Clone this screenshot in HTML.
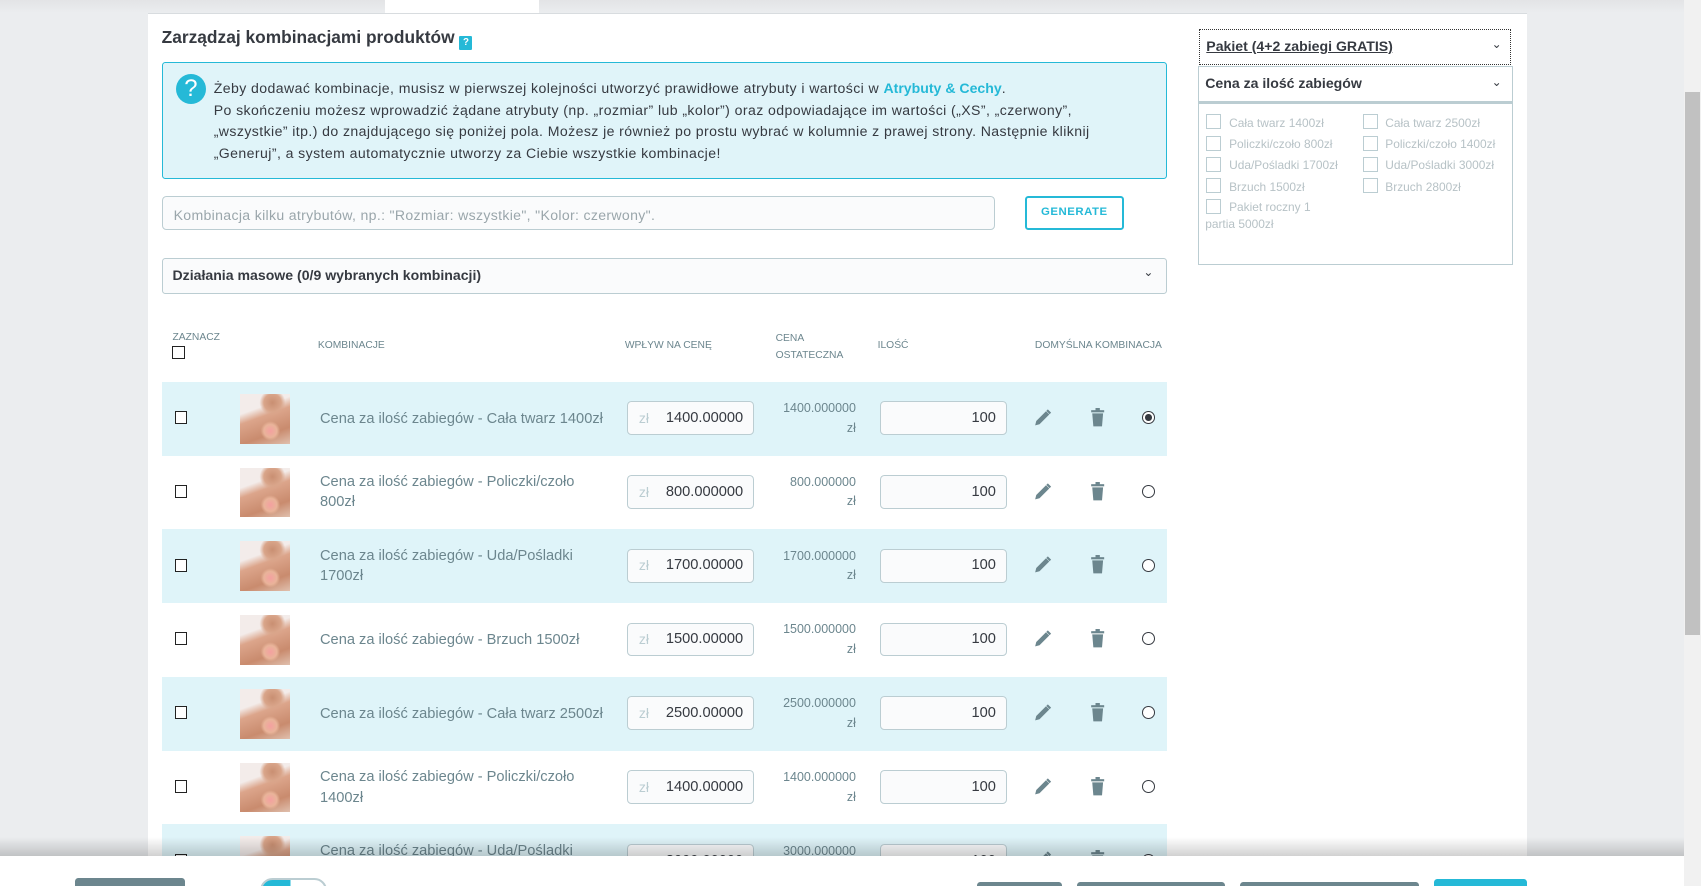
<!DOCTYPE html>
<html><head><meta charset="utf-8"><style>
html,body{margin:0;padding:0;overflow:hidden}
body{width:1568px;height:817px;zoom:1.0848;background:#ebedef;font-family:"Liberation Sans",sans-serif;position:relative;color:#363a41}
.a{position:absolute}
.row{position:absolute;left:149px;width:927px;height:68px}
.row.c{background:#dff4f9}
.cb{position:absolute;width:10px;height:10px;border:1.5px solid #222;background:#fff}
.th{position:absolute;font-size:9.5px;color:#6c868e;line-height:16px}
.nm{position:absolute;left:146px;width:270px;font-size:13.5px;color:#6c868e;line-height:19px}
.inp{position:absolute;background:#fafbfc;border:1px solid #bbcdd2;border-radius:4px;height:31px;box-sizing:border-box}
.fp{position:absolute;left:578px;width:80px;font-size:11.5px;color:#6c868e;text-align:right;line-height:18px}
.ck{position:absolute;width:12px;height:12px;border:1px solid #bbcdd2;background:#fff}
.cl{position:absolute;font-size:11px;color:#b7c2c6}
</style></head><body>
<div class="a" style="left:0;top:0;width:1552px;height:12px;background:linear-gradient(#e3e4e6,#ebedef)"></div>
<div class="a" style="left:355px;top:0;width:142px;height:12px;background:#fff"></div>
<div class="a" style="left:136px;top:12px;width:1272px;height:805px;background:#fff;border-top:1px solid #d8dcdf"></div>
<div class="a" style="left:1552px;top:0;width:16px;height:817px;background:#f1f1f1"></div>
<div class="a" style="left:1553px;top:85px;width:14px;height:500px;background:#c1c1c1"></div>

<div class="a" style="left:149px;top:25px;font-size:16px;font-weight:bold;color:#363a41">Zarządzaj kombinacjami produktów <span style="display:inline-block;width:12px;height:13px;background:#25b9d7;color:#fff;font-size:9px;text-align:center;line-height:13px;vertical-align:-2px;border-radius:1px">?</span></div>

<div class="a" style="left:149px;top:57px;width:925px;height:106px;background:#e0f4f9;border:1px solid #25b9d7;border-radius:3px"></div>
<div class="a" style="left:162px;top:68px;width:28px;height:28px;border-radius:50%;background:#25b9d7;color:#fff;font-size:22px;text-align:center;line-height:28px">?</div>
<div class="a" style="left:197px;top:72px;width:870px;font-size:13px;line-height:19.8px;color:#363a41;letter-spacing:0.38px">Żeby dodawać kombinacje, musisz w pierwszej kolejności utworzyć prawidłowe atrybuty i wartości w <b style="color:#25b9d7;letter-spacing:0">Atrybuty &amp; Cechy</b>.<br>Po skończeniu możesz wprowadzić żądane atrybuty (np. „rozmiar” lub „kolor”) oraz odpowiadające im wartości („XS”, „czerwony”,<br>„wszystkie” itp.) do znajdującego się poniżej pola. Możesz je również po prostu wybrać w kolumnie z prawej strony. Następnie kliknij<br>„Generuj”, a system automatycznie utworzy za Ciebie wszystkie kombinacje!</div>

<div class="a" style="left:149px;top:181px;width:766px;height:29px;border:1px solid #bbcdd2;border-radius:4px;background:#fafbfc"></div>
<div class="a" style="left:160px;top:191px;font-size:13px;color:#9aa6ab;letter-spacing:0.3px">Kombinacja kilku atrybutów, np.: "Rozmiar: wszystkie", "Kolor: czerwony".</div>
<div class="a" style="left:945px;top:181px;width:87px;height:27px;border:2px solid #25b9d7;border-radius:3px;color:#25b9d7;font-size:10.5px;font-weight:bold;text-align:center;line-height:27px;letter-spacing:.5px">GENERATE</div>

<div class="a" style="left:149px;top:238px;width:925px;height:31px;border:1px solid #bbcdd2;border-radius:3px;background:#fafbfc"></div>
<div class="a" style="left:159px;top:246px;font-size:13px;font-weight:bold;color:#363a41">Działania masowe (0/9 wybranych kombinacji)</div>
<div class="a" style="left:1054px;top:244px;font-size:11px;color:#363a41">&#8964;</div>

<div class="th" style="left:159px;top:303px">ZAZNACZ</div>
<div class="cb" style="left:159px;top:319px"></div>
<div class="th" style="left:293px;top:311px">KOMBINACJE</div>
<div class="th" style="left:576px;top:311px">WPŁYW NA CENĘ</div>
<div class="th" style="left:715px;top:304px">CENA<br>OSTATECZNA</div>
<div class="th" style="left:809px;top:311px">ILOŚĆ</div>
<div class="th" style="left:954px;top:311px">DOMYŚLNA KOMBINACJA</div>

<div id="rows"></div>
<script>
var d=[["Cena za ilość zabiegów - Cała twarz 1400zł","1400.00000","1400.000000"],
["Cena za ilość zabiegów - Policzki/czoło<br>800zł","800.000000","800.000000"],
["Cena za ilość zabiegów - Uda/Pośladki<br>1700zł","1700.00000","1700.000000"],
["Cena za ilość zabiegów - Brzuch 1500zł","1500.00000","1500.000000"],
["Cena za ilość zabiegów - Cała twarz 2500zł","2500.00000","2500.000000"],
["Cena za ilość zabiegów - Policzki/czoło<br>1400zł","1400.00000","1400.000000"],
["Cena za ilość zabiegów - Uda/Pośladki<br>3000zł","3000.00000","3000.000000"]];
var h="";
d.forEach(function(r,i){var t=352+68*i;var two=r[0].indexOf("<br>")>0;
h+='<div class="row'+(i%2==0?' c':'')+'" style="top:'+t+'px">'+
'<div class="cb" style="left:12px;top:27px"></div>'+
'<div style="position:absolute;left:72px;top:11px;width:46px;height:46px;background:radial-gradient(circle at 28px 34px,#f4a0a0 0,#e9b49a 6px,transparent 9px),radial-gradient(circle at 30px 8px,#c98f72 0,#d9a58a 8px,transparent 12px),linear-gradient(160deg,#f3ecea 0,#f3ecea 30%,#dca58b 45%,#c98b6e 75%,#e0c0ae 100%)"></div>'+
'<div class="nm" style="top:'+(two?15:25)+'px">'+r[0]+'</div>'+
'<div class="inp" style="left:429px;top:18px;width:117px"><span style="position:absolute;left:10px;top:7px;font-size:13px;color:#bbcdd2">zł</span><span style="position:absolute;right:9px;top:7px;font-size:13.5px;color:#363a41">'+r[1]+'</span></div>'+
'<div class="fp" style="top:16px;left:560px">'+r[2]+'<br>zł</div>'+
'<div class="inp" style="left:662px;top:18px;width:117px"><span style="position:absolute;right:9px;top:7px;font-size:13.5px;color:#363a41">100</span></div>'+
'<svg style="position:absolute;left:803px;top:24px" width="18" height="18" viewBox="0 0 18 18"><path d="M2 16 L3 12 L12 3 L15 6 L6 15 Z" fill="#6c868e"/><path d="M13 2 L16 5" stroke="#6c868e" stroke-width="2"/></svg>'+
'<svg style="position:absolute;left:855px;top:24px" width="16" height="18" viewBox="0 0 16 18"><rect x="2" y="2" width="12" height="2" fill="#6c868e"/><rect x="6" y="0" width="4" height="3" fill="#6c868e"/><path d="M3 5 H13 L12 17 H4 Z" fill="#6c868e"/></svg>'+
'<div style="position:absolute;left:904px;top:27px;width:10px;height:10px;border:1px solid #363a41;border-radius:50%;background:#fff">'+(i==0?'<div style="margin:2px;width:6px;height:6px;border-radius:50%;background:#363a41"></div>':'')+'</div>'+
'</div>';});
document.getElementById("rows").innerHTML=h;
</script>

<div class="a" style="left:1105px;top:27px;width:286px;height:31px;border:1px dotted #333;background:#fff"></div>
<div class="a" style="left:1112px;top:35px;font-size:13px;font-weight:bold;text-decoration:underline;color:#363a41">Pakiet (4+2 zabiegi GRATIS)</div>
<div class="a" style="left:1375px;top:34px;font-size:11px">&#8964;</div>
<div class="a" style="left:1104px;top:61px;width:289px;height:31px;border:1px solid #bbcdd2;border-bottom:2px solid #bbcdd2;background:#fff"></div>
<div class="a" style="left:1111px;top:69px;font-size:13px;font-weight:bold;color:#363a41">Cena za ilość zabiegów</div>
<div class="a" style="left:1375px;top:69px;font-size:11px">&#8964;</div>
<div class="a" style="left:1104px;top:95px;width:289px;height:147px;border:1px solid #bbcdd2;background:#fff"></div>
<div class="ck" style="left:1112px;top:105px"></div><div class="cl" style="left:1133px;top:107px">Cała twarz 1400zł</div>
<div class="ck" style="left:1256px;top:105px"></div><div class="cl" style="left:1277px;top:107px">Cała twarz 2500zł</div>
<div class="ck" style="left:1112px;top:125px"></div><div class="cl" style="left:1133px;top:126px">Policzki/czoło 800zł</div>
<div class="ck" style="left:1256px;top:125px"></div><div class="cl" style="left:1277px;top:126px">Policzki/czoło 1400zł</div>
<div class="ck" style="left:1112px;top:145px"></div><div class="cl" style="left:1133px;top:146px">Uda/Pośladki 1700zł</div>
<div class="ck" style="left:1256px;top:145px"></div><div class="cl" style="left:1277px;top:146px">Uda/Pośladki 3000zł</div>
<div class="ck" style="left:1112px;top:164px"></div><div class="cl" style="left:1133px;top:166px">Brzuch 1500zł</div>
<div class="ck" style="left:1256px;top:164px"></div><div class="cl" style="left:1277px;top:166px">Brzuch 2800zł</div>
<div class="ck" style="left:1112px;top:183px"></div><div class="cl" style="left:1133px;top:184px">Pakiet roczny 1</div>
<div class="cl" style="left:1111px;top:200px">partia 5000zł</div>

<div class="a" style="left:0;top:772px;width:1552px;height:17px;background:linear-gradient(rgba(0,0,0,0),rgba(0,0,0,.18))"></div>
<div class="a" style="left:0;top:789px;width:1552px;height:28px;background:#fff"></div>
<div class="a" style="left:69px;top:809px;width:102px;height:10px;background:#6c868e;border-radius:3px 3px 0 0"></div>
<div class="a" style="left:240px;top:809px;width:58px;height:20px;border-radius:12px;border:2px solid #bbcdd2;background:linear-gradient(90deg,#25b9d7 0 45%,#fff 45%)"></div>
<div class="a" style="left:901px;top:813px;width:78px;height:6px;background:#6c868e;border-radius:3px 3px 0 0"></div>
<div class="a" style="left:993px;top:813px;width:136px;height:6px;background:#6c868e;border-radius:3px 3px 0 0"></div>
<div class="a" style="left:1143px;top:813px;width:165px;height:6px;background:#6c868e;border-radius:3px 3px 0 0"></div>
<div class="a" style="left:1322px;top:810px;width:86px;height:9px;background:#25b9d7;border-radius:3px 3px 0 0"></div>
</body></html>
